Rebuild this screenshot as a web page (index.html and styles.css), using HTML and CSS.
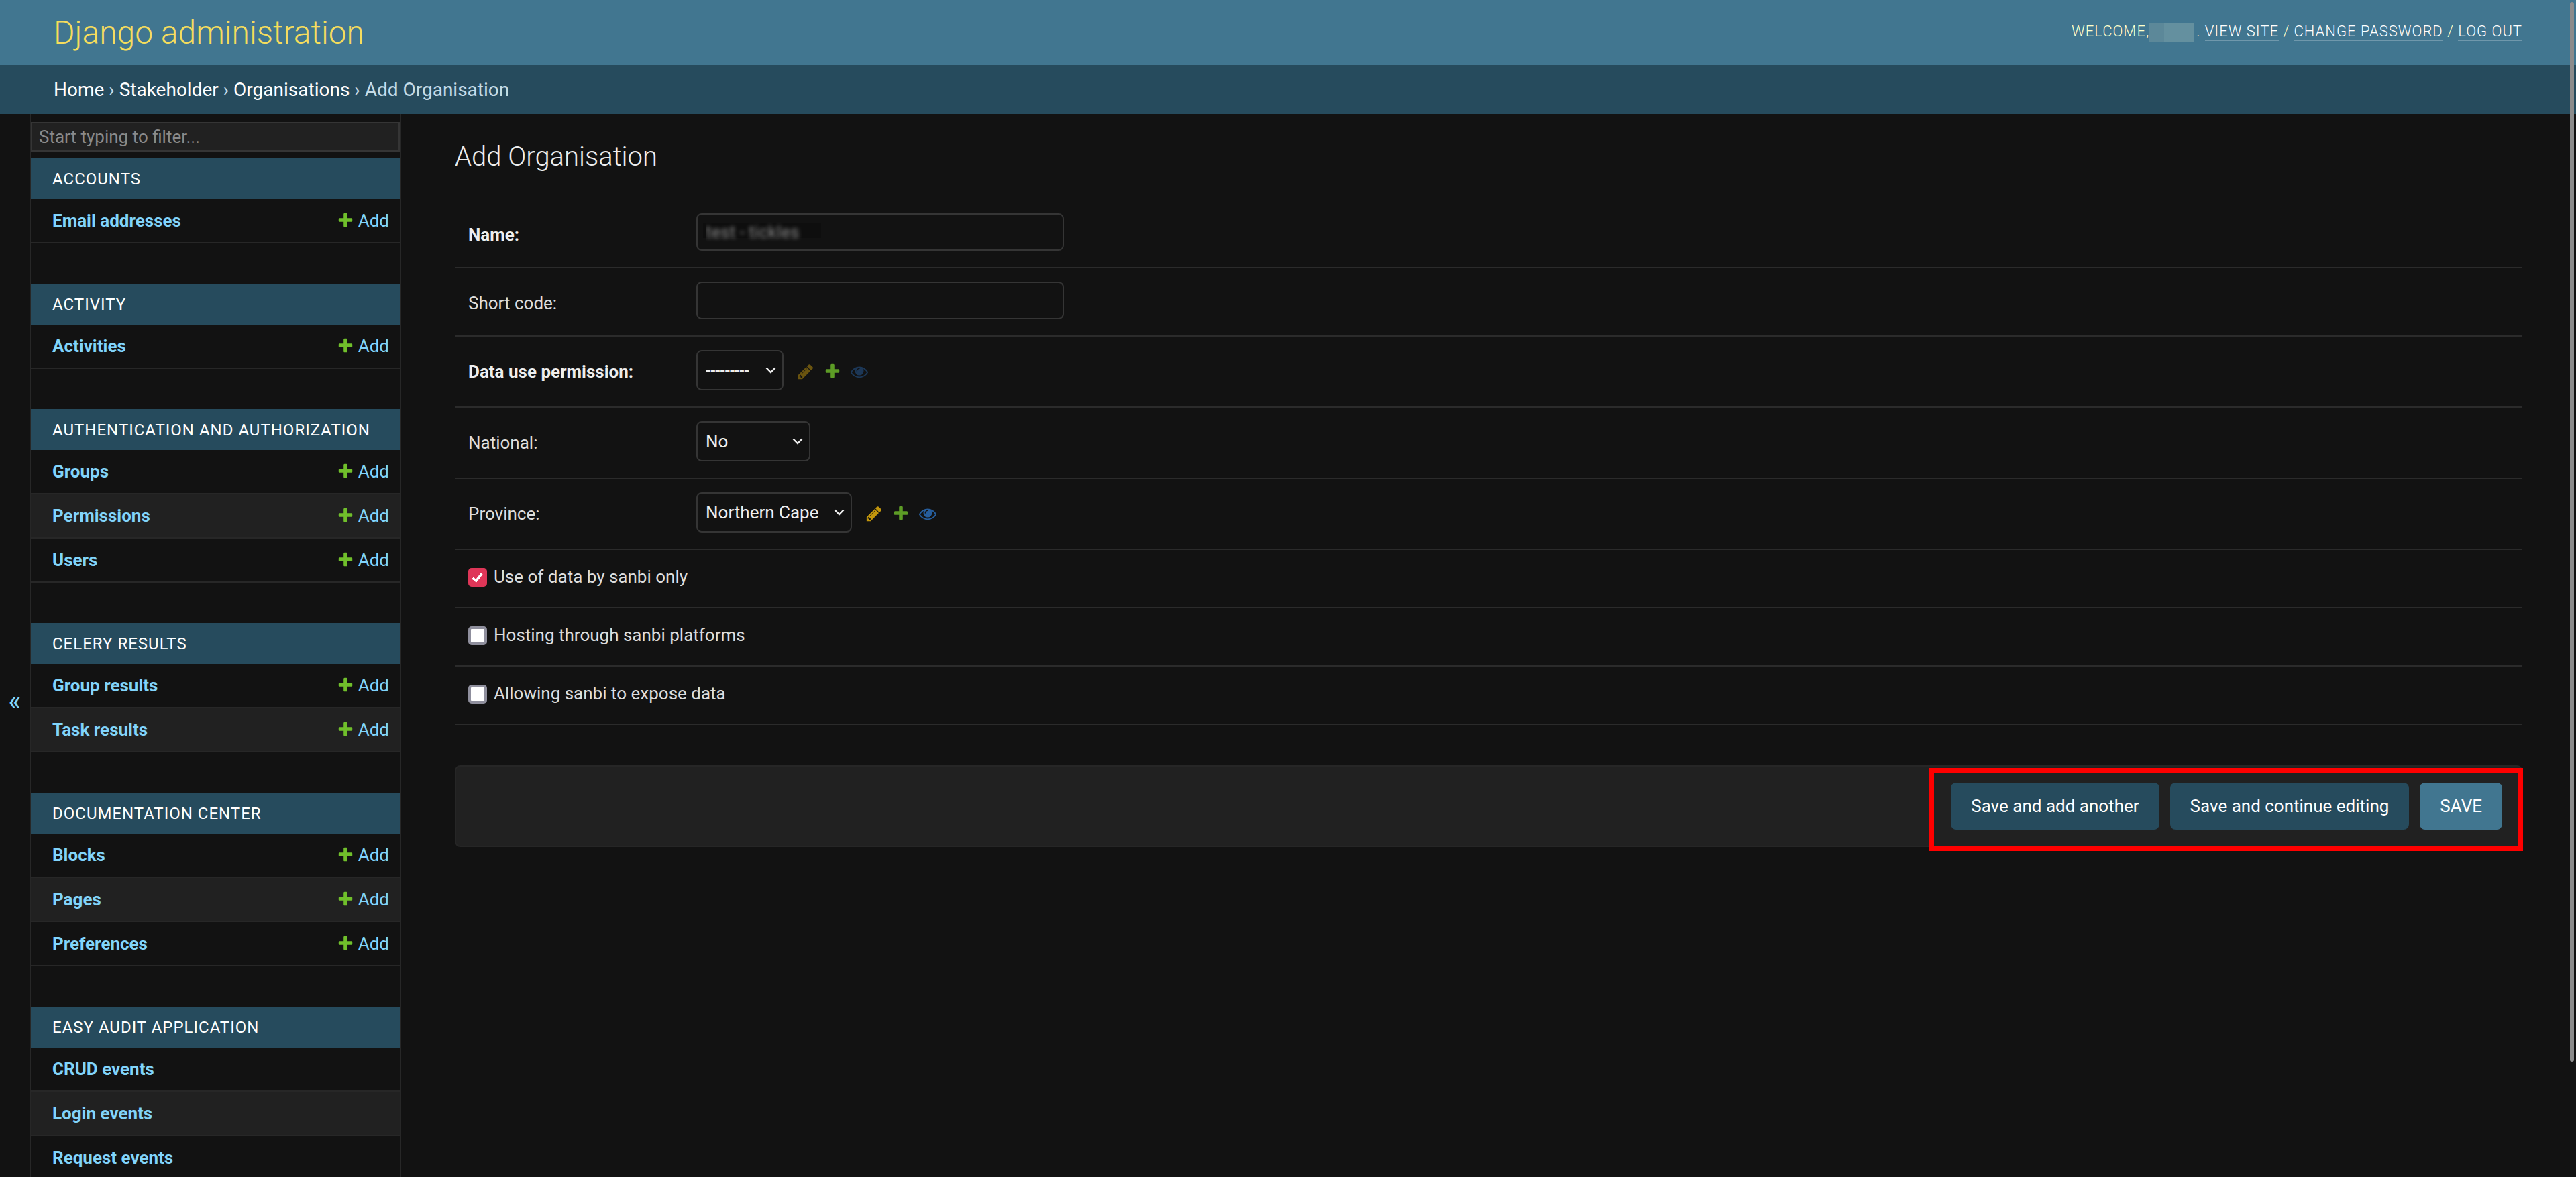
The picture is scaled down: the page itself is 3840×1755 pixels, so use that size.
FILE: index.html
```html
<!DOCTYPE html>
<html lang="en">
<head>
    <meta charset="UTF-8">
    <meta name="viewport" content="width=device-width, initial-scale=1.0">
    <title>Add Organisation | Django site admin</title>
    <link rel="stylesheet" href="styles.css">
</head>
<body>

    <svg class="icon-defs" width="0" height="0">
        <defs>
            <path id="icon-plus" d="M1600 736v192q0 40-28 68t-68 28h-416v416q0 40-28 68t-68 28h-192q-40 0-68-28t-28-68v-416h-416q-40 0-68-28t-28-68v-192q0-40 28-68t68-28h416v-416q0-40 28-68t68-28h192q40 0 68 28t28 68v416h416q40 0 68 28t28 68z"/>
            <path id="icon-pencil" d="M491 1536l91-91-235-235-91 91v107h128v128h107zm523-928q0-22-22-22-10 0-17 7l-542 542q-7 7-7 17 0 22 22 22 10 0 17-7l542-542q7-7 7-17zm-54-192l416 416-832 832h-416v-416zm683 96q0 53-37 90l-166 166-416-416 166-165q36-38 90-38 53 0 91 38l235 234q37 39 37 91z"/>
            <path id="icon-eye" d="M1664 960q-152-236-381-353 61 104 61 225 0 185-131.5 316.5t-316.5 131.5-316.5-131.5-131.5-316.5q0-121 61-225-229 117-381 353 133 205 333.5 326.5t434.5 121.5 434.5-121.5 333.5-326.5zm-720-384q0-20-14-34t-34-14q-125 0-214.5 89.5t-89.5 214.5q0 20 14 34t34 14 34-14 14-34q0-86 61-147t147-61q20 0 34-14t14-34zm848 384q0 34-20 69-140 230-376.5 368.5t-499.5 138.5-499.5-139-376.5-368q-20-35-20-69t20-69q140-229 376.5-368t499.5-139 499.5 139 376.5 368q20 35 20 69z"/>
        </defs>
    </svg>

    <!-- Header -->
    <div id="header">
        <h1 id="site-name"><a href="#">Django administration</a></h1>
        <div id="user-tools">Welcome,<span class="blurred-name"></span>. <a href="#">View site</a> / <a href="#">Change password</a> / <a href="#">Log out</a></div>
    </div>

    <div class="breadcrumbs">
        <a href="#">Home</a> &rsaquo; <a href="#">Stakeholder</a> &rsaquo; <a href="#">Organisations</a> &rsaquo; Add Organisation
    </div>

    <div id="main">
        <button class="toggle-nav" type="button">&laquo;</button>

        <!-- Sidebar -->
        <nav id="nav-sidebar">
            <input id="nav-filter" type="search" placeholder="Start typing to filter...">

            <div class="module">
                <div class="caption">Accounts</div>
                <div class="model-row"><a class="model-name" href="#">Email addresses</a><a class="addlink" href="#"><svg viewBox="0 0 1792 1792"><use href="#icon-plus"/></svg>Add</a></div>
            </div>

            <div class="module">
                <div class="caption">Activity</div>
                <div class="model-row"><a class="model-name" href="#">Activities</a><a class="addlink" href="#"><svg viewBox="0 0 1792 1792"><use href="#icon-plus"/></svg>Add</a></div>
            </div>

            <div class="module">
                <div class="caption">Authentication and Authorization</div>
                <div class="model-row"><a class="model-name" href="#">Groups</a><a class="addlink" href="#"><svg viewBox="0 0 1792 1792"><use href="#icon-plus"/></svg>Add</a></div>
                <div class="model-row"><a class="model-name" href="#">Permissions</a><a class="addlink" href="#"><svg viewBox="0 0 1792 1792"><use href="#icon-plus"/></svg>Add</a></div>
                <div class="model-row"><a class="model-name" href="#">Users</a><a class="addlink" href="#"><svg viewBox="0 0 1792 1792"><use href="#icon-plus"/></svg>Add</a></div>
            </div>

            <div class="module">
                <div class="caption">Celery Results</div>
                <div class="model-row"><a class="model-name" href="#">Group results</a><a class="addlink" href="#"><svg viewBox="0 0 1792 1792"><use href="#icon-plus"/></svg>Add</a></div>
                <div class="model-row"><a class="model-name" href="#">Task results</a><a class="addlink" href="#"><svg viewBox="0 0 1792 1792"><use href="#icon-plus"/></svg>Add</a></div>
            </div>

            <div class="module">
                <div class="caption">Documentation Center</div>
                <div class="model-row"><a class="model-name" href="#">Blocks</a><a class="addlink" href="#"><svg viewBox="0 0 1792 1792"><use href="#icon-plus"/></svg>Add</a></div>
                <div class="model-row"><a class="model-name" href="#">Pages</a><a class="addlink" href="#"><svg viewBox="0 0 1792 1792"><use href="#icon-plus"/></svg>Add</a></div>
                <div class="model-row"><a class="model-name" href="#">Preferences</a><a class="addlink" href="#"><svg viewBox="0 0 1792 1792"><use href="#icon-plus"/></svg>Add</a></div>
            </div>

            <div class="module">
                <div class="caption">Easy Audit Application</div>
                <div class="model-row"><a class="model-name" href="#">CRUD events</a></div>
                <div class="model-row"><a class="model-name" href="#">Login events</a></div>
                <div class="model-row"><a class="model-name" href="#">Request events</a></div>
            </div>
        </nav>

        <!-- Content -->
        <div id="content">
            <h1 class="content-title">Add Organisation</h1>

            <form>
                <div class="form-row">
                    <label class="field-label required" for="id_name">Name:</label>
                    <input class="text-input text-input-blurred" id="id_name" type="text" value="test - tickles">
                </div>
                <div class="form-row">
                    <label class="field-label" for="id_short_code">Short code:</label>
                    <input class="text-input" id="id_short_code" type="text">
                </div>
                <div class="form-row form-row-select">
                    <label class="field-label required" for="id_permission">Data use permission:</label>
                    <div class="select-box select-box-permission">
                        <select id="id_permission"><option>---------</option></select>
                        <svg class="chevron" viewBox="0 0 16 10"><path d="M1.5 1.5 8 8l6.5-6.5"/></svg>
                    </div>
                    <div class="related-links">
                        <svg class="related-icon icon-change is-disabled" viewBox="0 0 1792 1792"><use href="#icon-pencil"/></svg>
                        <svg class="related-icon icon-add" viewBox="0 0 1792 1792"><use href="#icon-plus"/></svg>
                        <svg class="related-icon icon-view is-disabled" viewBox="0 0 1792 1792"><use href="#icon-eye"/></svg>
                    </div>
                </div>
                <div class="form-row form-row-select">
                    <label class="field-label" for="id_national">National:</label>
                    <div class="select-box select-box-national">
                        <select id="id_national"><option>No</option><option>Yes</option></select>
                        <svg class="chevron" viewBox="0 0 16 10"><path d="M1.5 1.5 8 8l6.5-6.5"/></svg>
                    </div>
                </div>
                <div class="form-row form-row-select">
                    <label class="field-label" for="id_province">Province:</label>
                    <div class="select-box select-box-province">
                        <select id="id_province"><option>Northern Cape</option></select>
                        <svg class="chevron" viewBox="0 0 16 10"><path d="M1.5 1.5 8 8l6.5-6.5"/></svg>
                    </div>
                    <div class="related-links">
                        <svg class="related-icon icon-change" viewBox="0 0 1792 1792"><use href="#icon-pencil"/></svg>
                        <svg class="related-icon icon-add" viewBox="0 0 1792 1792"><use href="#icon-plus"/></svg>
                        <svg class="related-icon icon-view" viewBox="0 0 1792 1792"><use href="#icon-eye"/></svg>
                    </div>
                </div>
                <div class="form-row form-row-check">
                    <label class="check-label"><input class="check" type="checkbox" checked>Use of data by sanbi only</label>
                </div>
                <div class="form-row form-row-check">
                    <label class="check-label"><input class="check" type="checkbox">Hosting through sanbi platforms</label>
                </div>
                <div class="form-row form-row-check">
                    <label class="check-label"><input class="check" type="checkbox">Allowing sanbi to expose data</label>
                </div>

                <div class="submit-row">
                    <button class="btn" type="button">Save and add another</button>
                    <button class="btn" type="button">Save and continue editing</button>
                    <button class="btn btn-default" type="button">SAVE</button>
                    <div class="highlight-box"></div>
                </div>
            </form>
        </div>
    </div>

    <!-- Scrollbar thumb -->
    <div class="scroll-thumb"></div>

</body>
</html>
```

FILE: styles.css
```css
html, body {
    height: 100%;
    margin: 0;
    overflow: hidden;
}
body {
    background-color: #121212;
    color: #eeeeee;
    font-family: Roboto, "Liberation Sans", sans-serif;
    font-size: 28px;
    display: flex;
    flex-direction: column;
}
a {
    text-decoration: none;
}
.icon-defs {
    position: absolute;
}

/* Header */
#header {
    flex: 0 0 97px;
    box-sizing: border-box;
    padding: 0 80px;
    display: flex;
    align-items: center;
    justify-content: space-between;
    background-color: #417690;
}
#site-name {
    margin: 0;
    font-size: 48px;
    font-weight: 300;
    line-height: 58px;
}
#site-name a {
    color: #f5dd5d;
}
#user-tools {
    font-size: 22px;
    font-weight: 300;
    letter-spacing: 1px;
    text-transform: uppercase;
    color: #ffffcc;
}
#user-tools a {
    color: #fff;
    border-bottom: 2px solid rgba(255, 255, 255, 0.25);
}
.blurred-name {
    display: inline-block;
    width: 67px;
    height: 29px;
    margin-right: 3px;
    vertical-align: middle;
    background: linear-gradient(90deg, #5c8899 33%, #64909f 33%);
}

.breadcrumbs {
    flex: 0 0 73px;
    box-sizing: border-box;
    padding: 0 80px;
    background-color: #264b5d;
    color: #c4dce8;
    line-height: 73px;
}
.breadcrumbs a {
    color: #fff;
}

/* Main layout */
#main {
    flex: 1;
    display: flex;
    min-height: 0;
    overflow: hidden;
}
.toggle-nav {
    flex: 0 0 44px;
    height: 1750px;
    padding: 0;
    border: 0;
    background-color: #121212;
    color: #81d4fa;
    font-family: inherit;
    font-size: 40px;
}

/* Sidebar */
#nav-sidebar {
    flex: 0 0 550px;
    padding-top: 12px;
    border-left: 2px solid #272727;
    border-right: 2px solid #272727;
}
#nav-filter {
    display: block;
    box-sizing: border-box;
    width: 100%;
    height: 44px;
    margin: 0 0 10px;
    padding: 0 10px;
    border: 2px solid #353535;
    border-radius: 0;
    outline: none;
    background-color: #212121;
    color: #eee;
    font-family: inherit;
    font-size: 26px;
}
#nav-filter::placeholder {
    color: #8a8a8a;
}
.module {
    margin-bottom: 60px;
}
.caption {
    height: 61px;
    box-sizing: border-box;
    padding-left: 32px;
    display: flex;
    align-items: center;
    background-color: #264b5d;
    color: #fff;
    font-size: 24px;
    letter-spacing: 1px;
    text-transform: uppercase;
}
.model-row {
    height: 66px;
    box-sizing: border-box;
    padding: 0 16px 0 32px;
    display: flex;
    align-items: center;
    justify-content: space-between;
    border-bottom: 2px solid #272727;
    font-size: 26px;
}
.model-row:nth-child(odd) {
    background-color: #212121;
}
.model-name {
    color: #81d4fa;
    font-weight: 700;
}
.addlink {
    display: flex;
    align-items: center;
    gap: 6px;
    color: #81d4fa;
}
.addlink svg {
    width: 26px;
    height: 26px;
    fill: #70bf2b;
}

/* Content */
#content {
    flex: 1;
    padding: 40px 80px;
}
.content-title {
    margin: 0 0 40px;
    font-size: 40px;
    font-weight: 300;
    line-height: 48px;
}

/* Form */
.form-row {
    box-sizing: border-box;
    padding: 20px 20px 24px;
    display: flex;
    align-items: flex-start;
    border-bottom: 2px solid #2b2b2b;
}
.field-label {
    flex: 0 0 340px;
    padding-top: 16px;
    line-height: 32px;
    font-size: 26px;
    color: #dddddd;
}
.field-label.required {
    font-weight: 700;
    color: #eeeeee;
}
.text-input {
    box-sizing: border-box;
    width: 548px;
    height: 56px;
    padding: 0 12px;
    border: 2px solid #353535;
    border-radius: 8px;
    outline: none;
    background-color: #121212;
    color: #eee;
    font-family: inherit;
    font-size: 26px;
}
.text-input-blurred {
    color: transparent;
    text-shadow: 0 0 6px #8a8a8a;
    background-image: linear-gradient(#0e0e0e, #0e0e0e);
    background-repeat: no-repeat;
    background-position: 8px 13px;
    background-size: 176px 22px;
}
.select-box {
    position: relative;
    height: 60px;
}
.select-box select {
    display: block;
    box-sizing: border-box;
    width: 100%;
    height: 100%;
    padding: 0 12px;
    border: 2px solid #353535;
    border-radius: 8px;
    outline: none;
    appearance: none;
    background-color: #121212;
    color: #eee;
    font-family: inherit;
    font-size: 26px;
}
.select-box-permission {
    width: 130px;
}
.select-box-national {
    width: 170px;
}
.select-box-province {
    width: 232px;
}
.chevron {
    position: absolute;
    right: 11px;
    top: 25px;
    width: 16px;
    height: 10px;
    fill: none;
    stroke: #eeeeee;
    stroke-width: 2.4;
    pointer-events: none;
}
.related-links {
    display: flex;
    align-items: center;
    height: 60px;
    margin-left: 20px;
    gap: 14px;
    padding-top: 4px;
    box-sizing: border-box;
}
.related-icon {
    width: 26px;
    height: 26px;
    opacity: 0.8;
}
.related-icon.is-disabled {
    opacity: 0.4;
}
.icon-change {
    fill: #efb80b;
}
.icon-add {
    fill: #70bf2b;
}
.icon-view {
    fill: #2b70bf;
}

/* Checkbox rows */
.check-label {
    display: flex;
    align-items: center;
    height: 41px;
    font-size: 26px;
    line-height: 41px;
    color: #dddddd;
}
.check {
    position: relative;
    flex: 0 0 28px;
    box-sizing: border-box;
    width: 28px;
    height: 28px;
    margin: 0 10px 0 0;
    border: 4px solid #8f8f9d;
    border-radius: 5px;
    appearance: none;
    background-color: #fff;
}
.check:checked {
    border-color: #df3658;
    background-color: #df3658;
}
.check:checked::after {
    content: "";
    position: absolute;
    left: 5px;
    top: 1px;
    width: 5px;
    height: 12px;
    border: solid #fff;
    border-width: 0 4.5px 4.5px 0;
    border-radius: 1px;
    transform: rotate(38deg);
}

/* Submit row */
.submit-row {
    position: relative;
    box-sizing: border-box;
    margin-top: 60px;
    padding: 24px 28px;
    display: flex;
    justify-content: flex-end;
    gap: 16px;
    border: 2px solid #262626;
    border-radius: 8px;
    background-color: #212121;
}
.btn {
    height: 70px;
    padding: 0 30px;
    border: 0;
    border-radius: 8px;
    background-color: #264b5d;
    color: #fff;
    font-family: inherit;
    font-size: 26px;
}
.btn-default {
    background-color: #417690;
}
.highlight-box {
    position: absolute;
    right: -3px;
    top: 2px;
    width: 886px;
    height: 124px;
    box-sizing: border-box;
    border: 8px solid #ff0000;
    pointer-events: none;
}

.scroll-thumb {
    position: fixed;
    right: 3px;
    top: 3px;
    width: 6px;
    height: 1580px;
    border-radius: 3px;
    background-color: #8c8c8c;
}
```
